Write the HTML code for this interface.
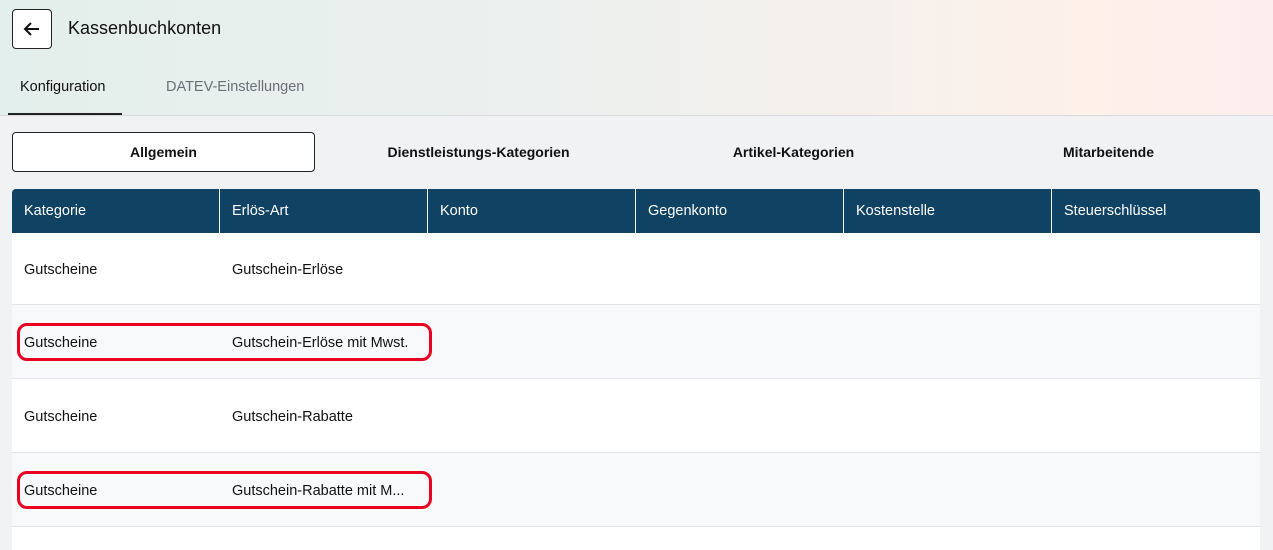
<!DOCTYPE html>
<html><head><style>
*{box-sizing:border-box;margin:0;padding:0}
html,body{width:1273px;height:550px;overflow:hidden}
body{background:#f1f2f4;font-family:"Liberation Sans",sans-serif;color:#111;position:relative}
.hdr{position:absolute;left:0;top:0;width:1273px;height:116px;background:linear-gradient(90deg,#e3efec 0%,#eef0ee 50%,#fdf1ea 85%,#fdeeee 100%);border-bottom:1px solid #d8dadd}
.back{position:absolute;left:12px;top:9px;width:40px;height:40px;border:1px solid #222;border-radius:4px;background:#fff}
.title{position:absolute;left:68px;top:18px;font-size:18px}
.tab{position:absolute;top:79px;font-size:14.5px}
.ul{position:absolute;left:8px;top:113px;width:114px;height:2px;background:#222}
.seg{position:absolute;top:132px;height:40px;font-size:14px;font-weight:bold;display:flex;align-items:center;justify-content:center;width:303px}
.tbl{position:absolute;left:12px;top:189px;width:1248px}
.th{height:44px;background:#0f4263;border-radius:4px 4px 0 0;display:flex}
.th div{width:208px;border-right:1px solid #fff;color:#fff;font-size:14.5px;padding:14px 12px 0}
.th div:last-child{border-right:none}
.row{height:74px;border-bottom:1px solid #e2e4e8;display:flex;align-items:center;font-size:14.5px;background:#fff;padding-top:3px}
.row.first{height:72px}
.row.alt{background:#f8f9fb}
.row.last{height:24px}
.row div{width:208px;padding-left:12px}
.red{position:absolute;left:17px;width:415px;height:38px;border:3px solid #ea0020;border-radius:10px}
</style></head><body>
<div class="hdr">
<div class="back"><svg width="38" height="38" viewBox="0 0 38 38"><path d="M26 19H12M18 13l-6 6 6 6" stroke="#111" stroke-width="2" fill="none"/></svg></div>
<div class="title">Kassenbuchkonten</div>
<div class="tab" style="left:20px">Konfiguration</div>
<div class="tab" style="left:166px;color:#6b6f76">DATEV-Einstellungen</div>
<div class="ul"></div>
</div>
<div class="seg" style="left:12px;background:#fff;border:1px solid #222;border-radius:4px">Allgemein</div>
<div class="seg" style="left:327px">Dienstleistungs-Kategorien</div>
<div class="seg" style="left:642px">Artikel-Kategorien</div>
<div class="seg" style="left:957px">Mitarbeitende</div>
<div class="tbl">
<div class="th"><div>Kategorie</div><div>Erlös-Art</div><div>Konto</div><div>Gegenkonto</div><div>Kostenstelle</div><div>Steuerschlüssel</div></div>
<div class="row first"><div>Gutscheine</div><div>Gutschein-Erlöse</div></div>
<div class="row alt"><div>Gutscheine</div><div>Gutschein-Erlöse mit Mwst.</div></div>
<div class="row"><div>Gutscheine</div><div>Gutschein-Rabatte</div></div>
<div class="row alt"><div>Gutscheine</div><div>Gutschein-Rabatte mit M...</div></div>
<div class="row last"></div>
</div>
<div class="red" style="top:323px"></div>
<div class="red" style="top:471px"></div>
</body></html>
